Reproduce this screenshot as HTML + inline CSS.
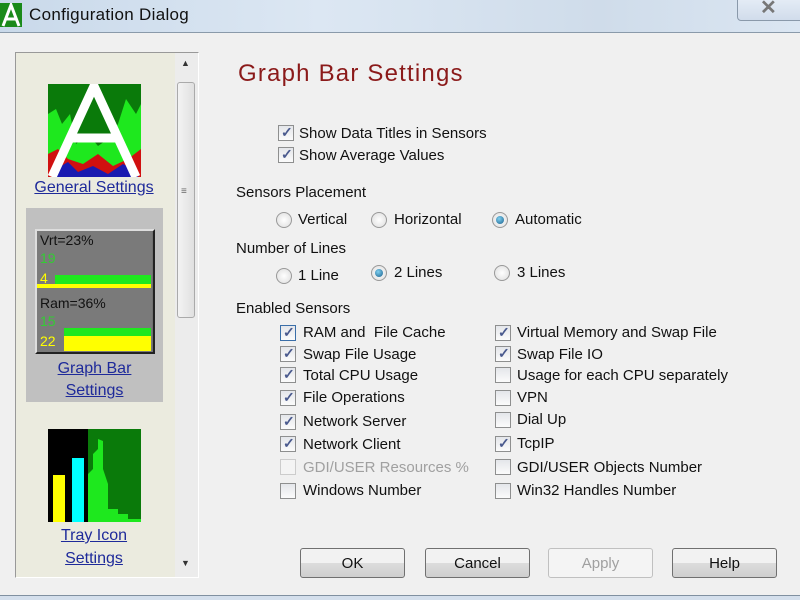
<!DOCTYPE html>
<html><head><style>
*{margin:0;padding:0;box-sizing:border-box}
body{width:800px;height:600px;overflow:hidden;background:#f0f0f0;font-family:"Liberation Sans",sans-serif;font-size:15px;color:#111;position:relative}
.a{position:absolute;white-space:nowrap}
.cb{position:absolute;width:16px;height:16px;border:1px solid #8e8f8f;background:linear-gradient(#e4e6ea,#fbfbfb);}
.cb.c::after{content:"✓";position:absolute;left:2px;top:-2px;font-size:14px;font-weight:bold;color:#4a5a8e}
.cb.d{border-color:#ccc;background:#f4f4f4}
.rb{position:absolute;width:16px;height:16px;border-radius:50%;border:1px solid #999;background:radial-gradient(#fff,#dcdcdc)}
.rb.c::after{content:"";position:absolute;left:3px;top:3px;width:8px;height:8px;border-radius:50%;background:radial-gradient(circle at 40% 35%,#7fd0f0,#1a5f8c)}
.btn{position:absolute;top:548px;width:105px;height:30px;border:1px solid #707070;border-radius:3px;background:linear-gradient(#f2f2f2 50%,#dddddd 50%,#cfcfcf);text-align:center;line-height:30px;font-size:15px}
.lnk{color:#1e2a9a;text-decoration:underline;font-size:16px;position:absolute;text-align:center}
</style></head><body>
<div class="a" style="left:0;top:0;width:800px;height:33px;background:linear-gradient(90deg,#c9d9ea,#dce7f3 40%,#cfdcea 75%,#dbe6f2);border-bottom:1px solid #8a9aaa"></div>
<div class="a" style="left:0;top:3px;width:22px;height:24px;background:#1a8a1a"><svg width="22" height="24"><path d="M3 23 L11 2 L19 23 M6 16 H16" stroke="#fff" stroke-width="3" fill="none"/></svg></div>
<div class="a" style="left:29px;top:5px;font-size:17px;color:#111;letter-spacing:0.3px">Configuration Dialog</div>
<div class="a" style="left:737px;top:-4px;width:70px;height:25px;border:1px solid #8a99aa;border-radius:4px;background:linear-gradient(#e6eef7,#d1dceb)"></div>
<div class="a" style="left:760px;top:-5px;font-size:20px;font-weight:bold;color:#777">✕</div>

<div class="a" style="left:15px;top:52px;width:184px;height:526px;border:1px solid #999;border-right-color:#fff;border-bottom-color:#fff;background:#ebebdf"></div>
<div class="a" style="left:175px;top:53px;width:23px;height:524px;background:#ececec"></div>
<div class="a" style="left:177px;top:82px;width:18px;height:236px;border:1px solid #aaa;border-radius:3px;background:linear-gradient(90deg,#f3f3f3,#e0e0e0)"></div>
<div class="a" style="left:181px;top:58px;font-size:9px;color:#333">▲</div>
<div class="a" style="left:181px;top:558px;font-size:9px;color:#333">▼</div>
<div class="a" style="left:181px;top:190px;font-size:10px;color:#666;line-height:3px">≡</div>

<svg class="a" style="left:48px;top:84px" width="93" height="93">
<rect width="93" height="93" fill="#0a7a0a"/>
<path d="M0 30 L8 25 L14 40 L22 30 L28 60 L40 50 L50 62 L60 55 L70 40 L78 15 L88 30 L93 20 V93 H0Z" fill="#1ee81e"/>
<path d="M0 70 L10 65 L20 75 L35 80 L50 70 L65 82 L80 75 L93 65 V93 H0Z" fill="#d01010"/>
<path d="M8 85 L20 78 L30 88 L45 82 L60 90 L75 80 L90 88 V93 H8Z" fill="#1a1ab0"/>
<path d="M4 93 L46 2 L88 93 M24 54 H68" stroke="#fff" stroke-width="9" fill="none"/>
</svg>
<div class="lnk" style="left:20px;top:179px;width:148px">General Settings</div>

<div class="a" style="left:26px;top:208px;width:137px;height:194px;background:#c0c0c0"></div>
<div class="a" style="left:35px;top:229px;width:120px;height:125px;background:#707070;border:2px solid #222;border-top-color:#ddd;border-left-color:#ddd"></div>
<div class="a" style="left:37px;top:231px;width:115px;height:60px;background:#7a7a7a"></div>
<div class="a" style="left:40px;top:232px;font-size:14px">Vrt=23%</div>
<div class="a" style="left:40px;top:250px;font-size:14px;color:#3c3">19</div>
<div class="a" style="left:55px;top:275px;width:96px;height:9px;background:#1ee81e"></div>
<div class="a" style="left:37px;top:284px;width:114px;height:4px;background:#ff0"></div>
<div class="a" style="left:40px;top:270px;font-size:14px;color:#ff0">4</div>
<div class="a" style="left:37px;top:291px;width:115px;height:61px;background:#7a7a7a"></div>
<div class="a" style="left:40px;top:295px;font-size:14px">Ram=36%</div>
<div class="a" style="left:40px;top:313px;font-size:14px;color:#3c3">15</div>
<div class="a" style="left:64px;top:328px;width:87px;height:8px;background:#1ee81e"></div>
<div class="a" style="left:64px;top:336px;width:87px;height:15px;background:#ff0"></div>
<div class="a" style="left:40px;top:333px;font-size:14px;color:#ff0">22</div>
<div class="lnk" style="left:26px;top:358px;width:137px;line-height:22px">Graph Bar<br>Settings</div>

<svg class="a" style="left:48px;top:429px" width="93" height="93">
<rect width="93" height="93" fill="#0a7a0a"/>
<rect x="0" y="0" width="40" height="93" fill="#000"/>
<rect x="5" y="46" width="12" height="47" fill="#ff0"/>
<rect x="24" y="29" width="12" height="64" fill="#0ff"/>
<path d="M40 93 V45 L45 40 V25 L50 20 V10 L55 12 V40 L60 55 V80 L70 80 V85 L80 85 V90 L93 90 V93Z" fill="#1ee81e"/>
</svg>
<div class="lnk" style="left:20px;top:524px;width:148px;line-height:23px">Tray Icon<br>Settings</div>

<div class="a" style="left:238px;top:60px;font-size:24px;color:#8b1a1a;letter-spacing:1.2px">Graph Bar Settings</div>

<div class="cb c" style="left:278px;top:125px"></div><div class="a" style="left:299px;top:125px">Show Data Titles in Sensors</div>
<div class="cb c" style="left:278px;top:147px"></div><div class="a" style="left:299px;top:147px">Show Average Values</div>
<div class="a" style="left:236px;top:184px">Sensors Placement</div>
<div class="rb" style="left:276px;top:212px"></div><div class="a" style="left:298px;top:211px">Vertical</div>
<div class="rb" style="left:371px;top:212px"></div><div class="a" style="left:394px;top:211px">Horizontal</div>
<div class="rb c" style="left:492px;top:212px"></div><div class="a" style="left:515px;top:211px">Automatic</div>
<div class="a" style="left:236px;top:240px">Number of Lines</div>
<div class="rb" style="left:276px;top:268px"></div><div class="a" style="left:298px;top:267px">1 Line</div>
<div class="rb c" style="left:371px;top:265px"></div><div class="a" style="left:394px;top:264px">2 Lines</div>
<div class="rb" style="left:494px;top:265px"></div><div class="a" style="left:517px;top:264px">3 Lines</div>
<div class="a" style="left:236px;top:300px">Enabled Sensors</div>

<div class="cb c" style="left:280px;top:325px;border-color:#3a6ea8"></div><div class="a" style="left:303px;top:324px">RAM and&nbsp; File Cache</div>
<div class="cb c" style="left:280px;top:346px"></div><div class="a" style="left:303px;top:346px">Swap File Usage</div>
<div class="cb c" style="left:280px;top:367px"></div><div class="a" style="left:303px;top:367px">Total CPU Usage</div>
<div class="cb c" style="left:280px;top:390px"></div><div class="a" style="left:303px;top:389px">File Operations</div>
<div class="cb c" style="left:280px;top:414px"></div><div class="a" style="left:303px;top:413px">Network Server</div>
<div class="cb c" style="left:280px;top:436px"></div><div class="a" style="left:303px;top:436px">Network Client</div>
<div class="cb d" style="left:280px;top:459px"></div><div class="a" style="left:303px;top:459px;color:#a0a0a0">GDI/USER Resources %</div>
<div class="cb" style="left:280px;top:483px"></div><div class="a" style="left:303px;top:482px">Windows Number</div>

<div class="cb c" style="left:495px;top:325px"></div><div class="a" style="left:517px;top:324px">Virtual Memory and Swap File</div>
<div class="cb c" style="left:495px;top:346px"></div><div class="a" style="left:517px;top:346px">Swap File IO</div>
<div class="cb" style="left:495px;top:367px"></div><div class="a" style="left:517px;top:367px">Usage for each CPU separately</div>
<div class="cb" style="left:495px;top:390px"></div><div class="a" style="left:517px;top:389px">VPN</div>
<div class="cb" style="left:495px;top:412px"></div><div class="a" style="left:517px;top:411px">Dial Up</div>
<div class="cb c" style="left:495px;top:436px"></div><div class="a" style="left:517px;top:435px">TcpIP</div>
<div class="cb" style="left:495px;top:459px"></div><div class="a" style="left:517px;top:459px">GDI/USER Objects Number</div>
<div class="cb" style="left:495px;top:483px"></div><div class="a" style="left:517px;top:482px">Win32 Handles Number</div>

<div class="btn" style="left:300px">OK</div>
<div class="btn" style="left:425px">Cancel</div>
<div class="btn" style="left:548px;color:#a0a0a0;border-color:#c0c0c0;background:#f4f4f4">Apply</div>
<div class="btn" style="left:672px">Help</div>
<div class="a" style="left:0;top:595px;width:800px;height:5px;border-top:1px solid #8090a0;background:#d4dfec"></div>
</body></html>
